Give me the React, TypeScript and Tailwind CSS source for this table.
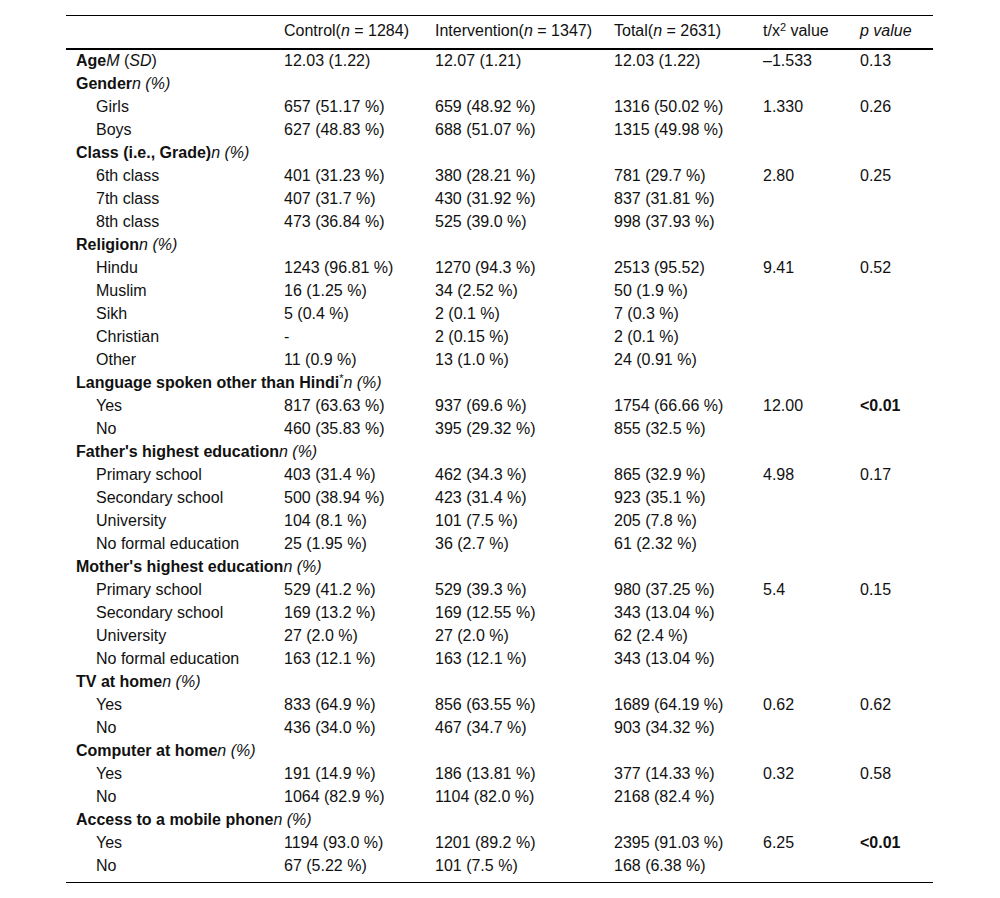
type Row = {
  label: React.ReactNode;
  group?: boolean;
  c?: string;
  i?: string;
  t?: string;
  v?: string;
  p?: React.ReactNode;
};

const np = <i>n (%)</i>;
const bold01 = <b>&lt;0.01</b>;

const rows: Row[] = [
  { label: <><b>Age</b><i>M</i> (<i>SD</i>)</>, group: true, c: "12.03 (1.22)", i: "12.07 (1.21)", t: "12.03 (1.22)", v: "–1.533", p: "0.13" },
  { label: <><b>Gender</b>{np}</>, group: true },
  { label: "Girls", c: "657 (51.17 %)", i: "659 (48.92 %)", t: "1316 (50.02 %)", v: "1.330", p: "0.26" },
  { label: "Boys", c: "627 (48.83 %)", i: "688 (51.07 %)", t: "1315 (49.98 %)" },
  { label: <><b>Class (i.e., Grade)</b>{np}</>, group: true },
  { label: "6th class", c: "401 (31.23 %)", i: "380 (28.21 %)", t: "781 (29.7 %)", v: "2.80", p: "0.25" },
  { label: "7th class", c: "407 (31.7 %)", i: "430 (31.92 %)", t: "837 (31.81 %)" },
  { label: "8th class", c: "473 (36.84 %)", i: "525 (39.0 %)", t: "998 (37.93 %)" },
  { label: <><b>Religion</b>{np}</>, group: true },
  { label: "Hindu", c: "1243 (96.81 %)", i: "1270 (94.3 %)", t: "2513 (95.52)", v: "9.41", p: "0.52" },
  { label: "Muslim", c: "16 (1.25 %)", i: "34 (2.52 %)", t: "50 (1.9 %)" },
  { label: "Sikh", c: "5 (0.4 %)", i: "2 (0.1 %)", t: "7 (0.3 %)" },
  { label: "Christian", c: "-", i: "2 (0.15 %)", t: "2 (0.1 %)" },
  { label: "Other", c: "11 (0.9 %)", i: "13 (1.0 %)", t: "24 (0.91 %)" },
  { label: <><b>Language spoken other than Hindi</b><sup className="text-[11px]">*</sup>{np}</>, group: true },
  { label: "Yes", c: "817 (63.63 %)", i: "937 (69.6 %)", t: "1754 (66.66 %)", v: "12.00", p: bold01 },
  { label: "No", c: "460 (35.83 %)", i: "395 (29.32 %)", t: "855 (32.5 %)" },
  { label: <><b>Father's highest education</b>{np}</>, group: true },
  { label: "Primary school", c: "403 (31.4 %)", i: "462 (34.3 %)", t: "865 (32.9 %)", v: "4.98", p: "0.17" },
  { label: "Secondary school", c: "500 (38.94 %)", i: "423 (31.4 %)", t: "923 (35.1 %)" },
  { label: "University", c: "104 (8.1 %)", i: "101 (7.5 %)", t: "205 (7.8 %)" },
  { label: "No formal education", c: "25 (1.95 %)", i: "36 (2.7 %)", t: "61 (2.32 %)" },
  { label: <><b>Mother's highest education</b>{np}</>, group: true },
  { label: "Primary school", c: "529 (41.2 %)", i: "529 (39.3 %)", t: "980 (37.25 %)", v: "5.4", p: "0.15" },
  { label: "Secondary school", c: "169 (13.2 %)", i: "169 (12.55 %)", t: "343 (13.04 %)" },
  { label: "University", c: "27 (2.0 %)", i: "27 (2.0 %)", t: "62 (2.4 %)" },
  { label: "No formal education", c: "163 (12.1 %)", i: "163 (12.1 %)", t: "343 (13.04 %)" },
  { label: <><b>TV at home</b>{np}</>, group: true },
  { label: "Yes", c: "833 (64.9 %)", i: "856 (63.55 %)", t: "1689 (64.19 %)", v: "0.62", p: "0.62" },
  { label: "No", c: "436 (34.0 %)", i: "467 (34.7 %)", t: "903 (34.32 %)" },
  { label: <><b>Computer at home</b>{np}</>, group: true },
  { label: "Yes", c: "191 (14.9 %)", i: "186 (13.81 %)", t: "377 (14.33 %)", v: "0.32", p: "0.58" },
  { label: "No", c: "1064 (82.9 %)", i: "1104 (82.0 %)", t: "2168 (82.4 %)" },
  { label: <><b>Access to a mobile phone</b>{np}</>, group: true },
  { label: "Yes", c: "1194 (93.0 %)", i: "1201 (89.2 %)", t: "2395 (91.03 %)", v: "6.25", p: bold01 },
  { label: "No", c: "67 (5.22 %)", i: "101 (7.5 %)", t: "168 (6.38 %)" },
];

export default function App() {
  return (
    <div className="min-h-screen bg-white px-[66px] pt-[15px] font-['Liberation_Sans',Arial,sans-serif] text-[16px] text-[#111]">
      <table className="w-[867px] table-fixed border-collapse">
        <colgroup>
          <col className="w-[208px]" />
          <col className="w-[151px]" />
          <col className="w-[179px]" />
          <col className="w-[149px]" />
          <col className="w-[97px]" />
          <col className="w-[83px]" />
        </colgroup>
        <thead>
          <tr className="h-[33px] border-t border-b-2 border-black leading-[20px]">
            <th className="pl-[10px] pb-[1px] text-left font-normal"></th>
            <th className="pl-[10px] pb-[1px] text-left font-normal whitespace-nowrap">Control(<i>n</i> = 1284)</th>
            <th className="pl-[10px] pb-[1px] text-left font-normal whitespace-nowrap">Intervention(<i>n</i> = 1347)</th>
            <th className="pl-[10px] pb-[1px] text-left font-normal whitespace-nowrap">Total(<i>n</i> = 2631)</th>
            <th className="pl-[10px] pb-[1px] text-left font-normal whitespace-nowrap">
              t/x<sup className="text-[11px]">2</sup> value
            </th>
            <th className="pl-[10px] pb-[1px] text-left font-normal"><i>p value</i></th>
          </tr>
        </thead>
        <tbody className="border-b border-black">
          {rows.map((r, k) => (
            <tr key={k} className="h-[23px] leading-[22px]">
              <td className={r.group ? "pl-[10px] pb-[1px] whitespace-nowrap" : "pl-[30px] pb-[1px] whitespace-nowrap"}>{r.label}</td>
              <td className="pl-[10px] pb-[1px] whitespace-nowrap">{r.c}</td>
              <td className="pl-[10px] pb-[1px] whitespace-nowrap">{r.i}</td>
              <td className="pl-[10px] pb-[1px] whitespace-nowrap">{r.t}</td>
              <td className="pl-[10px] pb-[1px] whitespace-nowrap">{r.v}</td>
              <td className="pl-[10px] pb-[1px] whitespace-nowrap">{r.p}</td>
            </tr>
          ))}
          <tr className="h-[5px]">
            <td colSpan={6}></td>
          </tr>
        </tbody>
      </table>
    </div>
  );
}
